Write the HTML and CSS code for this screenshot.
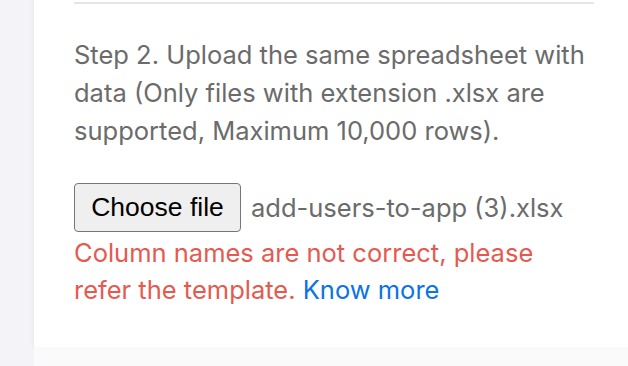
FILE: index.html
```
<!DOCTYPE html>
<html lang="en">
<head>
  <meta charset="UTF-8">
  <title>Upload users</title>
  <link rel="stylesheet" href="styles.css">
</head>
<body>
  <div class="page">
    <div class="card">
      <div class="step-body">
        <hr class="divider">
        <p class="step-text">Step 2. Upload the same spreadsheet with data (Only files with extension .xlsx are supported, Maximum 10,000 rows).</p>
        <div class="file-row">
          <button class="file-btn">Choose file</button>
          <span class="file-name">add-users-to-app (3).xlsx</span>
        </div>
        <p class="error-text">Column names are not correct, please refer the template. <a href="#" class="know-more">Know more</a></p>
      </div>
    </div>
    <div class="below"></div>
  </div>
</body>
</html>
```
FILE: styles.css
```
body
{
  margin:0;
  background:#f4f4f8;
  font-family:Inter, "Liberation Sans", sans-serif;
}
.page
{
  padding-left:34px;
  height:366px;
  overflow:hidden;
}
.card
{
  background:#fff;
  box-shadow:0 0 6px rgba(0,0,0,0.08);
}
.step-body
{
  padding:2px 34px 39px 40px;
}
.divider
{
  margin:0;
  border:0;
  height:2px;
  background:#e6e6e6;
}
.step-text
{
  margin:32px 0 0;
  font-size:25.5px;
  line-height:38px;
  color:#6b6b6b;
}
.file-row
{
  display:flex;
  align-items:center;
  gap:10px;
  margin-top:33px;
}
.file-btn
{
  width:167px;
  height:49px;
  border:1.5px solid #767676;
  border-radius:4px;
  background:#efefef;
  color:#000;
  font-family:"Liberation Sans", Arial, sans-serif;
  font-size:26.5px;
  padding:0;
}
.file-name
{
  font-size:25.5px;
  color:#6b6b6b;
}
.error-text
{
  margin:2px 0 0;
  font-size:25.5px;
  line-height:37px;
  color:#e55a50;
}
.know-more
{
  color:#0b72e7;
  text-decoration:none;
}
.below
{
  height:20px;
  background:#fafafa;
}
```
